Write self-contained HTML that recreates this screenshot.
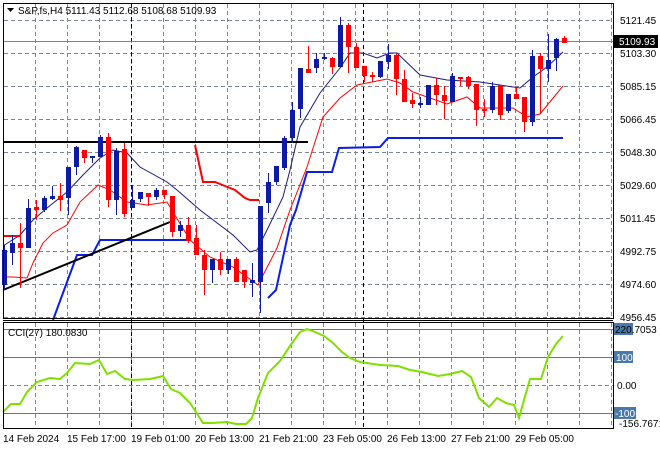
<!DOCTYPE html>
<html><head><meta charset="utf-8"><style>
html,body{margin:0;padding:0;background:#fff;}
svg{display:block;font-family:"Liberation Sans",sans-serif;}
text{font-size:10px;fill:#000;}
</style></head><body>
<svg id="s" width="660" height="450" viewBox="0 0 660 450" xmlns="http://www.w3.org/2000/svg">
<rect width="660" height="450" fill="#fff"/>
<g id="grid" stroke="#7a8590" stroke-width="1" stroke-dasharray="4,3" shape-rendering="crispEdges"></g>
<!-- CCI levels -->
<g stroke="#4a78a8" stroke-width="1" shape-rendering="crispEdges">
<line x1="3" y1="329.5" x2="613" y2="329.5"/>
<line x1="3" y1="357.5" x2="613" y2="357.5"/>
<line x1="3" y1="413.5" x2="613" y2="413.5"/>
</g>
<line x1="3" y1="385.5" x2="613" y2="385.5" stroke="#7a8590" stroke-dasharray="4,3" shape-rendering="crispEdges"/>
<line x1="131.5" y1="3" x2="131.5" y2="428" stroke="#000" stroke-dasharray="4,3" shape-rendering="crispEdges"/>
<line x1="363.5" y1="3" x2="363.5" y2="428" stroke="#000" stroke-dasharray="4,3" shape-rendering="crispEdges"/>
<!-- price line -->
<line x1="3" y1="41.5" x2="613" y2="41.5" stroke="#7a8590" shape-rendering="crispEdges"/>
<!-- indicators -->
<polyline fill="none" stroke="#1a1a80" stroke-width="1" points="3,246 20,235 33,220 47,208 67,192 83,175 100,158 113,150 127,153 140,167 167,182 177,190 200,210 233,235 250,252 257,250 267,230 283,197 290,170 300,127 320,93 340,68 350,53 363,53 377,58 390,53 397,53 420,75 447,80 480,82 520,88 533,77 547,67 563,52"/>
<polyline fill="none" stroke="#ff0000" stroke-width="1" points="3,277 13,277 27,278 33,263 43,243 53,233 67,225 80,202 98,185 110,190 127,202 147,205 167,202 173,212 190,240 210,257 233,267 247,277 258,285 277,248 290,210 307,167 323,117 340,98 357,85 367,83 387,79 400,83 413,92 430,98 447,104 467,97 480,108 497,108 513,108 527,117 540,114 563,86"/>
<polyline fill="none" stroke="#ff0000" stroke-width="2" points="3,236 20,236"/>
<polyline fill="none" stroke="#ff0000" stroke-width="2" points="195,145 203,182 215,182 225,186 235,190 245,198 250,200 259,200"/>
<polyline fill="none" stroke="#0a1ee6" stroke-width="2" points="53,320 77,255 92,255 100,240 187,240"/>
<polyline fill="none" stroke="#0a1ee6" stroke-width="2" points="268,298 276,290 290,225 296,210 307,172 332,172 339,148 380,147 388,138 563,138"/>
<line x1="3" y1="142" x2="308" y2="142" stroke="#000" stroke-width="2"/>
<line x1="3" y1="290" x2="170" y2="222" stroke="#000" stroke-width="2"/>
<g id="candles" shape-rendering="crispEdges"></g>
<!-- CCI -->
<polyline fill="none" stroke="#7fe000" stroke-width="2" points="3,412 11,404 20,404 27,392 37,382 50,378 60,379 67,373 75,363 90,364 99,360 107,374 115,371 125,379 133,380 150,379 163,376 171,389 180,393 190,403 196,412 203,423 212,423 227,422 236,424 246,424 252,418 258,398 268,373 280,361 290,346 300,332 307,329 315,332 324,336 333,343 342,352 350,358 360,362 380,365 398,366 410,370 422,372 438,376 450,374 462,371 471,377 479,398 489,407 497,398 506,403 514,405 519,418 524,400 530,379 541,379 548,357 556,344 563,336"/>
<!-- frames -->
<g stroke="#000" fill="none" shape-rendering="crispEdges">
<rect x="3.5" y="3.5" width="610" height="315"/>
<line x1="3" y1="320.5" x2="613" y2="320.5"/>
<rect x="3.5" y="322.5" width="610" height="106"/>
</g>
<!-- header -->
<path d="M7,8 L14,8 L10.5,12 Z" fill="#000"/>
<text x="18" y="14">S&amp;P,fs,H4  5111.43 5112.68 5108.68 5109.93</text>
<text x="8" y="336">CCI(27) 180.0830</text>
<!-- price axis -->
<g>
<text x="620" y="24">5121.45</text>
<text x="620" y="57">5103.30</text>
<text x="620" y="90">5085.15</text>
<text x="620" y="123">5066.45</text>
<text x="620" y="156">5048.30</text>
<text x="620" y="189">5029.60</text>
<text x="620" y="222">5011.45</text>
<text x="620" y="255">4992.75</text>
<text x="620" y="288">4974.60</text>
<text x="620" y="321">4956.45</text>
</g>
<rect x="614" y="35" width="44" height="13" fill="#000"/>
<text x="619" y="45" style="fill:#fff">5109.93</text>
<rect x="614" y="323" width="19" height="12" fill="#4a78a8"/>
<text x="615" y="333">220.7053</text>
<rect x="614" y="351" width="19" height="12" fill="#4a78a8"/>
<text x="616" y="361" style="fill:#fff">100</text>
<text x="617" y="389">0.00</text>
<rect x="614" y="407" width="22" height="12" fill="#4a78a8"/>
<text x="615" y="417" style="fill:#fff">-100</text>
<text x="619" y="427">-156.7671</text>
<!-- time axis -->
<g>
<text x="3" y="442">14 Feb 2024</text>
<text x="67" y="442">15 Feb 17:00</text>
<text x="131" y="442">19 Feb 01:00</text>
<text x="195" y="442">20 Feb 13:00</text>
<text x="259" y="442">21 Feb 21:00</text>
<text x="323" y="442">23 Feb 05:00</text>
<text x="387" y="442">26 Feb 13:00</text>
<text x="451" y="442">27 Feb 21:00</text>
<text x="515" y="442">29 Feb 05:00</text>
</g>
</svg>
<script>
var NS="http://www.w3.org/2000/svg";
var g=document.getElementById('grid');
function ln(p,x1,y1,x2,y2){var l=document.createElementNS(NS,'line');l.setAttribute('x1',x1);l.setAttribute('y1',y1);l.setAttribute('x2',x2);l.setAttribute('y2',y2);p.appendChild(l);}
for(var x=35;x<613;x+=32){ln(g,x+.5,4,x+.5,318);ln(g,x+.5,323,x+.5,428);}
for(var y=20;y<=317;y+=33){if(y==20)continue;ln(g,4,y+.5,613,y+.5);}
ln(g,4,20.5,613,20.5);
var d=[
[1,245,290,250,285],[1,235,265,243,253],[0,223,288,243,248],[1,199,248,208,248],[0,200,220,207,210],
[1,196,212,198,210],[1,186,200,196,199],[0,183,211,196,200],[1,167,215,167,198],[1,146,175,147,167],
[0,150,163,150,158],[1,156,163,156,158],[1,135,157,137,157],[0,133,207,137,200],[1,148,215,151,200],
[0,143,217,149,214],[1,185,208,200,208],[1,192,202,192,199],[0,193,206,193,197],[1,188,200,190,197],
[0,190,199,190,195],[0,196,237,196,232],[1,221,237,225,231],[0,217,243,225,241],[0,225,255,238,255],
[0,250,295,255,270],[1,259,283,259,270],[0,252,275,259,270],[1,259,274,259,270],[0,257,282,259,282],
[0,270,288,270,282],[1,263,297,280,283],[1,206,313,206,282],[1,173,213,182,203],[1,166,185,166,182],
[1,136,170,138,168],[1,102,143,110,138],[1,68,118,68,109],[0,46,73,69,73],[1,53,73,59,68],
[1,53,60,57,59],[0,57,74,58,67],[1,17,68,25,67],[0,23,73,25,47],[0,43,68,47,68],
[0,66,82,66,76],[0,72,82,75,77],[1,61,78,61,77],[1,44,69,55,62],[0,53,95,55,79],
[0,70,102,79,102],[0,93,108,100,104],[1,97,108,103,105],[1,85,105,85,105],[0,78,105,85,95],
[0,86,119,95,101],[1,73,102,76,102],[0,77,86,77,78],[0,76,89,77,86],[0,84,126,84,110],
[0,99,117,109,110],[1,82,113,86,110],[0,85,120,85,115],[1,94,113,94,111],[0,87,99,94,99],
[0,97,132,97,122],[1,50,126,56,122],[0,53,114,56,69],[1,34,82,60,69],[1,38,71,39,58],[0,36,43,38,43]];
var c=document.getElementById('candles');
for(var k=0;k<d.length;k++){var e=d[k],cx=4+8*k,col=e[0]?'#0c1ca0':'#ff0000';
var w=document.createElementNS(NS,'rect');w.setAttribute('x',cx);w.setAttribute('y',e[1]);w.setAttribute('width',1);w.setAttribute('height',e[2]-e[1]);w.setAttribute('fill',col);c.appendChild(w);
var b=document.createElementNS(NS,'rect');b.setAttribute('x',cx-2);b.setAttribute('y',e[3]);b.setAttribute('width',5);b.setAttribute('height',Math.max(2,e[4]-e[3]));b.setAttribute('fill',col);c.appendChild(b);}
</script>
</body></html>
